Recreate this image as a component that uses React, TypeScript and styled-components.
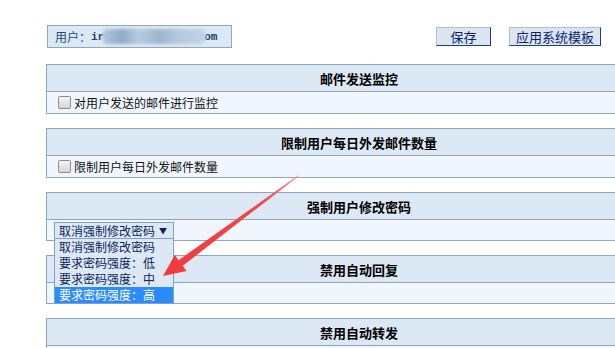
import React from 'react';
import styled, { createGlobalStyle } from 'styled-components';

const Global = createGlobalStyle`
  html, body {
    margin: 0;
    padding: 0;
    background: #fff;
    overflow: hidden;
  }
  body {
    font-family: "Noto Sans CJK SC", "Liberation Sans", sans-serif;
    font-size: 12px;
  }
`;

const Page = styled.div`
  position: relative;
  box-sizing: border-box;
  width: 615px;
  height: 348px;
  overflow: hidden;
  padding: 25px 0 0 46px;
`;

const Content = styled.div`
  width: 626px;
`;

const TopBar = styled.div`
  display: flex;
  align-items: flex-start;
  width: 555px;
  height: 23px;
`;

const UserBox = styled.div`
  box-sizing: border-box;
  width: 185px;
  height: 23px;
  margin-left: 1px;
  border: 1px solid #8fa7bc;
  background: #dce8f4;
  color: #1d4c7c;
  display: flex;
  align-items: center;
  padding-left: 7px;
  font-size: 12px;
`;

const Mono = styled.span`
  font-family: "Liberation Mono", monospace;
  font-weight: bold;
  font-size: 11px;
  color: #17406e;
`;

const Blur = styled.span`
  display: inline-block;
  width: 104px;
  height: 15px;
  margin: 0 -2px;
  border-radius: 6px;
  background: linear-gradient(90deg, #b3c8dc 0%, #8fabc6 20%, #b8cbde 35%, #9db6ce 55%, #b7cadd 75%, #c3d3e3 100%);
  filter: blur(1.5px);
`;

const Buttons = styled.div`
  margin-left: auto;
  display: flex;
  gap: 18px;
  padding-top: 2px;
`;

const Button = styled.button<{ $w: number }>`
  box-sizing: border-box;
  width: ${p => p.$w}px;
  height: 19px;
  padding: 0;
  background: #dae6f2;
  border: 1px solid;
  border-color: #a9c0d6 #1f3f6e #1f3f6e #a9c0d6;
  color: #0e1f6b;
  font-family: "Noto Sans CJK SC", sans-serif;
  font-size: 13px;
  line-height: 17px;
`;

const Sections = styled.div`
  display: flex;
  flex-direction: column;
  gap: 14px;
  margin-top: 16px;
`;

const Section = styled.div`
  position: relative;
  border: 1px solid #8ea6bb;
`;

const Header = styled.div`
  height: 26px;
  background: #dce8f4;
  border-bottom: 1px solid #8ea6bb;
  display: flex;
  align-items: center;
  justify-content: center;
  font-size: 13px;
  font-weight: bold;
  color: #000;
`;

const Row = styled.div<{ $h?: number }>`
  height: ${p => p.$h ?? 20}px;
  background: #eff6fe;
  display: flex;
  align-items: center;
  padding-left: 11px;
  color: #111;
`;

const Check = styled.span`
  box-sizing: border-box;
  width: 13px;
  height: 13px;
  border: 1px solid #8d8d8d;
  border-radius: 2px;
  background: linear-gradient(#f4f4f4, #d4d4d4);
  margin-right: 3px;
`;

const SelectWrap = styled.div`
  position: relative;
  margin-left: -4px;
`;

const SelectBox = styled.div`
  box-sizing: border-box;
  width: 120px;
  height: 17px;
  border: 1px solid #7f9fd6;
  background: #dce8f4;
  color: #0e1f5c;
  display: flex;
  align-items: center;
  padding-left: 4px;
  font-size: 12px;
`;

const Caret = styled.span`
  margin-left: auto;
  margin-right: 6px;
  font-size: 8px;
  color: #0e1f5c;
`;

const Menu = styled.div`
  position: absolute;
  top: 17px;
  left: 0;
  width: 120px;
  box-sizing: border-box;
  border: 1px solid #7f9fd6;
  border-top: none;
  background: #dce8f4;
  z-index: 5;
`;

const Option = styled.div<{ $active?: boolean }>`
  height: 16px;
  line-height: 16px;
  padding-left: 4px;
  font-size: 12px;
  color: ${p => (p.$active ? '#fff' : '#0e1f5c')};
  background: ${p => (p.$active ? '#2a8cfa' : 'transparent')};
`;

const Arrow = styled.svg`
  position: absolute;
  left: 0;
  top: 0;
  width: 615px;
  height: 348px;
  pointer-events: none;
  z-index: 10;
`;

const options = ['取消强制修改密码', '要求密码强度：低', '要求密码强度：中', '要求密码强度：高'];

const App: React.FC = () => {
  return (
    <Page>
      <Global />
      <Content>
        <TopBar>
          <UserBox>
            用户：<Mono>ir</Mono>
            <Blur />
            <Mono>om</Mono>
          </UserBox>
          <Buttons>
            <Button $w={55}>保存</Button>
            <Button $w={92}>应用系统模板</Button>
          </Buttons>
        </TopBar>

        <Sections>
          <Section>
            <Header>邮件发送监控</Header>
            <Row $h={21}>
              <Check />
              对用户发送的邮件进行监控
            </Row>
          </Section>
          <Section>
            <Header>限制用户每日外发邮件数量</Header>
            <Row $h={21}>
              <Check />
              限制用户每日外发邮件数量
            </Row>
          </Section>
          <Section>
            <Header>强制用户修改密码</Header>
            <Row>
              <SelectWrap>
                <SelectBox>
                  取消强制修改密码
                  <Caret>▼</Caret>
                </SelectBox>
                <Menu>
                  {options.map((o, i) => (
                    <Option key={o} $active={i === 3}>
                      {o}
                    </Option>
                  ))}
                </Menu>
              </SelectWrap>
            </Row>
          </Section>
          <Section>
            <Header>禁用自动回复</Header>
            <Row />
          </Section>
          <Section>
            <Header>禁用自动转发</Header>
            <Row />
          </Section>
        </Sections>
      </Content>

      <Arrow viewBox="0 0 615 348">
        <defs>
          <linearGradient id="ag" x1="298" y1="176" x2="163" y2="276" gradientUnits="userSpaceOnUse">
            <stop offset="0" stopColor="#f49a9a" />
            <stop offset="0.25" stopColor="#ef4a4a" />
            <stop offset="1" stopColor="#f03a3a" />
          </linearGradient>
        </defs>
        <polygon
          points="298.3,176.4 297.7,175.6 178.6,260.2 174.8,254.9 163,276 186.6,271 182.8,265.7"
          fill="url(#ag)"
        />
      </Arrow>
    </Page>
  );
};

export default App;
